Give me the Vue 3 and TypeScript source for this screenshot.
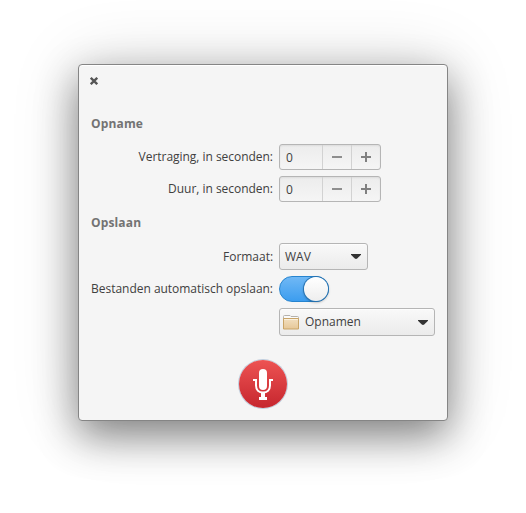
<script setup lang="ts">
import { reactive, ref } from 'vue'

interface Spinner {
  label: string
  value: number
}

const spinners = reactive<Spinner[]>([
  { label: 'Vertraging, in seconden:', value: 0 },
  { label: 'Duur, in seconden:', value: 0 },
])
const autoSave = ref(true)

function step(spinner: Spinner, delta: number) {
  spinner.value = Math.max(0, spinner.value + delta)
}
</script>

<template>
  <main class="desktop">
    <section class="window">
      <header class="titlebar">
        <button class="close">
          <svg width="8" height="8" viewBox="0 0 8 8"><path d="M.8.8L7.200 7.200M7.200.8L.8 7.200" stroke="#555" stroke-width="2.300" fill="none" /></svg>
        </button>
      </header>

      <h2 class="heading">Opname</h2>
      <div class="grid spin-grid">
        <template v-for="s in spinners" :key="s.label">
          <span class="label">{{ s.label }}</span>
          <div class="spin">
            <span class="value">{{ s.value }}</span>
            <button class="step" @click="step(s, -1)">
              <svg width="10" height="10" viewBox="0 0 10 10"><path d="M0 4h10v2H0z" fill="#8e8e8e" /></svg>
            </button>
            <button class="step" @click="step(s, 1)">
              <svg width="10" height="10" viewBox="0 0 10 10"><path d="M0 4h4V0h2v4h4v2H6v4H4V6H0z" fill="#808080" /></svg>
            </button>
          </div>
        </template>
      </div>

      <h2 class="heading">Opslaan</h2>
      <div class="grid save-grid">
        <span class="label">Formaat:</span>
        <button class="combo format">
          <span>WAV</span>
          <svg class="arrow" width="10" height="5" viewBox="0 0 10 5"><path d="M0 0h10v.8L6.2 4.5Q5 5.4 3.8 4.5L0 .8z" fill="#333" /></svg>
        </button>
        <span class="label">Bestanden automatisch opslaan:</span>
        <button class="switch" :class="{ on: autoSave }" @click="autoSave = !autoSave"><span class="knob"></span></button>
        <span></span>
        <button class="combo folder">
          <svg class="folder-icon" width="16" height="15" viewBox="0 0 16 15">
            <defs>
              <linearGradient id="folderFill" x1="0" y1="0" x2="0" y2="1">
                <stop offset="0" stop-color="#f2dfc0" />
                <stop offset="1" stop-color="#e6c797" />
              </linearGradient>
            </defs>
            <path d="M.5 4V1.5Q.5.5 1.5.5H7l1 1h6.5q1 0 1 1V4" fill="#fafafa" stroke="#b5b2ad" />
            <path d="M.5 3.5h15v10.5H.5z" fill="url(#folderFill)" stroke="#c9a467" />
            <path d="M1 4.5h14" stroke="#faf0dd" />
          </svg>
          <span>Opnamen</span>
          <svg class="arrow" width="10" height="5" viewBox="0 0 10 5"><path d="M0 0h10v.8L6.2 4.5Q5 5.4 3.8 4.5L0 .8z" fill="#333" /></svg>
        </button>
      </div>

      <footer class="actions">
        <button class="record">
          <svg width="20" height="31" viewBox="0 0 20 31">
            <rect x="6" y="0" width="8" height="21" rx="4" fill="#fff" />
            <path d="M0 11h3v5.500C3 21 6 23.500 10 23.500S17 21 17 16.500V11h3" fill="none" stroke="#fff" stroke-width="2" />
            <path d="M8 23h4v5h2v3H6v-3h2z" fill="#fff" />
          </svg>
        </button>
      </footer>
    </section>
  </main>
</template>

<style>
body {
  margin: 0;
  background: #fff;
}
</style>

<style scoped>
.desktop {
  box-sizing: border-box;
  width: 526px;
  height: 513px;
  padding: 64px 78px;
  overflow: hidden;
  background: #fff;
  color: #404040;
  font: 12px/18px "Open Sans", "Noto Sans", sans-serif;
}
button {
  box-sizing: border-box;
  padding: 0;
  margin: 0;
  border: 0;
  background: none;
  color: inherit;
  font: inherit;
}
svg {
  display: block;
  flex: none;
}
.window {
  box-sizing: border-box;
  width: 370px;
  height: 357px;
  padding: 0 12px;
  border: 1px solid #858585;
  border-radius: 4px;
  background: #f5f5f5;
  box-shadow:
    inset 0 1px #fff,
    0 0 70px rgba(0, 0, 0, 0.14),
    0 15px 40px rgba(0, 0, 0, 0.45);
}
.titlebar {
  display: flex;
  height: 50px;
  padding-top: 12px;
  box-sizing: border-box;
}
.close {
  width: 8px;
  height: 8px;
  margin-left: -1px;
}
.heading {
  margin: 0;
  color: #737373;
  font-size: 12px;
  font-weight: 700;
  line-height: 18px;
  letter-spacing: 0.15px;
}
.grid {
  display: grid;
  grid-template-columns: 182px 156px;
  column-gap: 6px;
  row-gap: 6px;
  align-items: center;
  justify-items: start;
}
.spin-grid {
  padding: 11px 0 12px;
}
.save-grid {
  padding-top: 11px;
}
.label {
  justify-self: end;
  white-space: nowrap;
  letter-spacing: -0.03px;
}
.spin {
  box-sizing: border-box;
  display: flex;
  width: 102px;
  height: 26px;
  border: 1px solid #b5b5b5;
  border-radius: 3px;
  background: linear-gradient(#ececec, #f5f5f5);
  box-shadow: inset 0 1px 2px rgba(0, 0, 0, 0.07);
}
.value {
  width: 36px;
  padding-left: 6px;
  line-height: 25px;
}
.step {
  display: flex;
  width: 29px;
  height: 24px;
  align-items: center;
  justify-content: center;
  border-left: 1px solid #d2d2d2;
}
.combo {
  display: flex;
  align-items: center;
  border: 1px solid #b5b5b5;
  border-radius: 3px;
  background: linear-gradient(#f9f9f9, #ebebeb);
  box-shadow: inset 0 1px rgba(255, 255, 255, 0.6);
}
.arrow {
  margin-left: auto;
}
.format {
  width: 89px;
  height: 27px;
  padding: 0 6px 0 5px;
}
.folder {
  width: 156px;
  height: 28px;
  padding: 0 6px 0 3px;
}
.folder-icon {
  margin-right: 6px;
}
.switch {
  display: flex;
  width: 50px;
  height: 26px;
  border: 1px solid #aaa;
  border-radius: 13px;
  background: #ddd;
}
.switch.on {
  justify-content: flex-end;
  border-color: #2684cf;
  background: linear-gradient(#70b8f5, #3c9def);
}
.knob {
  width: 24px;
  height: 24px;
  border-radius: 50%;
  background: linear-gradient(#fff, #eee);
  box-shadow: 0 0 0 1px #2673b2, 0 1px 3px rgba(0, 0, 0, 0.4);
}
.actions {
  display: flex;
  justify-content: center;
  padding-top: 24px;
}
.record {
  display: flex;
  width: 48px;
  height: 48px;
  align-items: center;
  justify-content: center;
  border-radius: 50%;
  background: linear-gradient(#ed5353, #c6262e);
  box-shadow: 0 0 0 1px #bfcddd;
}
</style>
